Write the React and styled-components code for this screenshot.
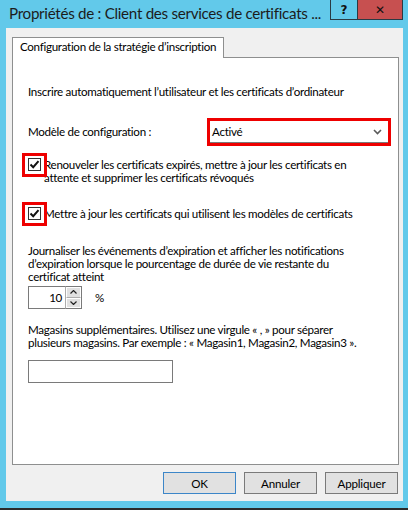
import React from "react";
import styled, { createGlobalStyle } from "styled-components";

const GlobalStyle = createGlobalStyle`
  html, body { margin: 0; padding: 0; background: #ffffff; }
  body { width: 408px; height: 511px; overflow: hidden; font-family: Lato, "Noto Sans", sans-serif; }
`;

const Page = styled.div`
  width: 408px;
  height: 511px;
  display: flex;
  flex-direction: column;
  background: #ffffff;
`;

const Window = styled.div`
  width: 408px;
  box-sizing: border-box;
  background: #62c9ea;
  padding: 0 5px 7px 6px;
  display: flex;
  flex-direction: column;
  border-bottom: 2px solid #2b2b2b;
`;

const TitleBar = styled.div`
  height: 28px;
  display: flex;
  align-items: flex-start;
`;

const Title = styled.div`
  flex: 1;
  padding: 3px 0 0 3px;
  font-family: Lato, "Noto Sans", sans-serif;
  font-size: 15.2px;
  letter-spacing: -0.3px;
  line-height: 21px;
  color: #1c1c1c;
  white-space: nowrap;
  overflow: hidden;
`;

const CaptionButton = styled.div`
  box-sizing: border-box;
  height: 20px;
  width: ${(p) => p.$w}px;
  background: ${(p) => p.$bg};
  border: 1px solid #2a3a44;
  border-top: none;
  ${(p) => (p.$noLeft ? "border-left: none;" : "")}
  display: flex;
  align-items: center;
  justify-content: center;
  font-family: "DejaVu Sans", sans-serif;
  font-weight: bold;
  font-size: 12px;
  color: #111;
`;

const Client = styled.div`
  height: 473px;
  box-sizing: border-box;
  background: #f0f0f0;
  padding: 9px 4px 7px 6px;
  display: flex;
  flex-direction: column;
`;

const TabStrip = styled.div`
  display: flex;
`;

const Tab = styled.div`
  position: relative;
  z-index: 1;
  box-sizing: border-box;
  width: 212px;
  height: 21px;
  margin-bottom: -1px;
  background: #ffffff;
  border: 1px solid #8e8f8f;
  border-bottom: none;
  padding-left: 7px;
  font-size: 11.6px;
  letter-spacing: -0.3px;
  line-height: 18px;
  color: #000;
  white-space: nowrap;
`;

const Panel = styled.div`
  box-sizing: border-box;
  height: 408px;
  background: #ffffff;
  border: 1px solid #8e8f8f;
  padding: 0 0 0 15px;
  display: flex;
  flex-direction: column;
  align-items: flex-start;
  font-size: 11.6px;
  letter-spacing: -0.3px;
  line-height: 13px;
  color: #000;
`;

const Text = styled.div`
  margin-top: ${(p) => p.$mt || 0}px;
  white-space: nowrap;
`;

const ConfigRow = styled.div`
  margin-top: 22px;
  display: flex;
  align-items: center;
  height: 23px;
`;

const Label = styled.div`
  width: 181px;
  white-space: nowrap;
`;

const Annotated = styled.div`
  position: relative;
  display: flex;
`;

const RedFrame = styled.div`
  position: absolute;
  left: ${(p) => p.$l}px;
  top: ${(p) => p.$t}px;
  width: ${(p) => p.$w}px;
  height: ${(p) => p.$h}px;
  box-sizing: border-box;
  border: 3px solid #ee0000;
  pointer-events: none;
`;

const Select = styled.div`
  box-sizing: border-box;
  width: 180px;
  height: 23px;
  border: 1px solid #7a7a7a;
  background: #fff;
  display: flex;
  align-items: center;
  justify-content: space-between;
  padding: 0 6px 0 2px;
`;

const CheckRow = styled.div`
  margin-top: ${(p) => p.$mt}px;
  display: flex;
  align-items: flex-start;
`;

const CheckBox = styled.div`
  position: relative;
  flex: none;
  box-sizing: border-box;
  width: 13px;
  height: 13px;
  border: 1px solid #333;
  background: #fff;
  margin-right: 3px;
  display: flex;
  align-items: center;
  justify-content: center;
`;

const SpinRow = styled.div`
  margin-top: 3px;
  display: flex;
  align-items: center;
`;

const SpinInput = styled.div`
  box-sizing: border-box;
  width: 37px;
  height: 23px;
  border: 1px solid #7a7a7a;
  border-right: none;
  background: #fff;
  text-align: right;
  padding-right: 3px;
  line-height: 21px;
`;

const SpinButtons = styled.div`
  display: flex;
  flex-direction: column;
  width: 17px;
  height: 23px;
  box-sizing: border-box;
  border: 1px solid #7a7a7a;
  border-left: 1px solid #adadad;
`;

const SpinButton = styled.div`
  flex: 1;
  background: #e1e1e1;
  border: 1px solid #ffffff;
  ${(p) => (p.$top ? "border-bottom: 1px solid #adadad;" : "")}
  display: flex;
  align-items: center;
  justify-content: center;
`;

const Percent = styled.div`
  margin-left: 13px;
`;

const TextBox = styled.div`
  margin-top: 11px;
  box-sizing: border-box;
  width: 145px;
  height: 23px;
  border: 1px solid #7a7a7a;
  background: #fff;
`;

const ButtonRow = styled.div`
  margin-top: 7px;
  margin-right: 1px;
  display: flex;
  justify-content: flex-end;
  gap: 8px;
`;

const Button = styled.div`
  box-sizing: border-box;
  width: 73px;
  height: 22px;
  background: #e1e1e1;
  border: 1px solid ${(p) => (p.$default ? "#3c86c8" : "#7a7a7a")};
  display: flex;
  align-items: center;
  justify-content: center;
  font-size: 11.6px;
  letter-spacing: -0.2px;
  color: #000;
`;

const Below = styled.div`
  flex: 1;
  background: #ffffff;
`;

const Check = () => (
  <svg width="11" height="11" viewBox="0 0 11 11">
    <path d="M1.5 5.5 L4.2 8.2 L9.5 2.2" fill="none" stroke="#111" strokeWidth="2" />
  </svg>
);

const Chevron = () => (
  <svg width="9" height="6" viewBox="0 0 9 6">
    <path d="M1 1 L4.5 4.5 L8 1" fill="none" stroke="#5a5a5a" strokeWidth="1.6" />
  </svg>
);

const Arrow = ({ up }) => (
  <svg width="7" height="4" viewBox="0 0 7 4">
    <path d={up ? "M0.5 3.5 L3.5 0.5 L6.5 3.5" : "M0.5 0.5 L3.5 3.5 L6.5 0.5"} fill="none" stroke="#222" strokeWidth="1.2" />
  </svg>
);

export default function App() {
  return (
    <Page>
      <GlobalStyle />
      <Window>
        <TitleBar>
          <Title>Propriétés de : Client des services de certificats ...</Title>
          <CaptionButton $w={28} $bg="#62c9ea">?</CaptionButton>
          <CaptionButton $w={45} $bg="#c75050" $noLeft>
            ✕
          </CaptionButton>
        </TitleBar>
        <Client>
          <TabStrip>
            <Tab>Configuration de la stratégie d’inscription</Tab>
          </TabStrip>
          <Panel>
            <Text $mt={27}>
              Inscrire automatiquement l’utilisateur et les certificats d’ordinateur
            </Text>
            <ConfigRow>
              <Label>Modèle de configuration :</Label>
              <Annotated>
                <Select>
                  <span>Activé</span>
                  <Chevron />
                </Select>
                <RedFrame $l={-2} $t={-2} $w={184} $h={28} />
              </Annotated>
            </ConfigRow>
            <CheckRow $mt={15}>
              <CheckBox>
                <Check />
                <RedFrame $l={-7} $t={-6} $w={25} $h={24} />
              </CheckBox>
              <Text>
                Renouveler les certificats expirés, mettre à jour les certificats en
                <br />
                attente et supprimer les certificats révoqués
              </Text>
            </CheckRow>
            <CheckRow $mt={23}>
              <CheckBox>
                <Check />
                <RedFrame $l={-7} $t={-6} $w={25} $h={24} />
              </CheckBox>
              <Text>Mettre à jour les certificats qui utilisent les modèles de certificats</Text>
            </CheckRow>
            <Text $mt={24}>
              Journaliser les événements d’expiration et afficher les notifications
              <br />
              d’expiration lorsque le pourcentage de durée de vie restante du
              <br />
              certificat atteint
            </Text>
            <SpinRow>
              <SpinInput>10</SpinInput>
              <SpinButtons>
                <SpinButton $top>
                  <Arrow up />
                </SpinButton>
                <SpinButton>
                  <Arrow />
                </SpinButton>
              </SpinButtons>
              <Percent>%</Percent>
            </SpinRow>
            <Text $mt={14}>
              Magasins supplémentaires. Utilisez une virgule « , » pour séparer
              <br />
              plusieurs magasins. Par exemple : « Magasin1, Magasin2, Magasin3 ».
            </Text>
            <TextBox />
          </Panel>
          <ButtonRow>
            <Button $default>OK</Button>
            <Button>Annuler</Button>
            <Button>Appliquer</Button>
          </ButtonRow>
        </Client>
      </Window>
      <Below />
    </Page>
  );
}
